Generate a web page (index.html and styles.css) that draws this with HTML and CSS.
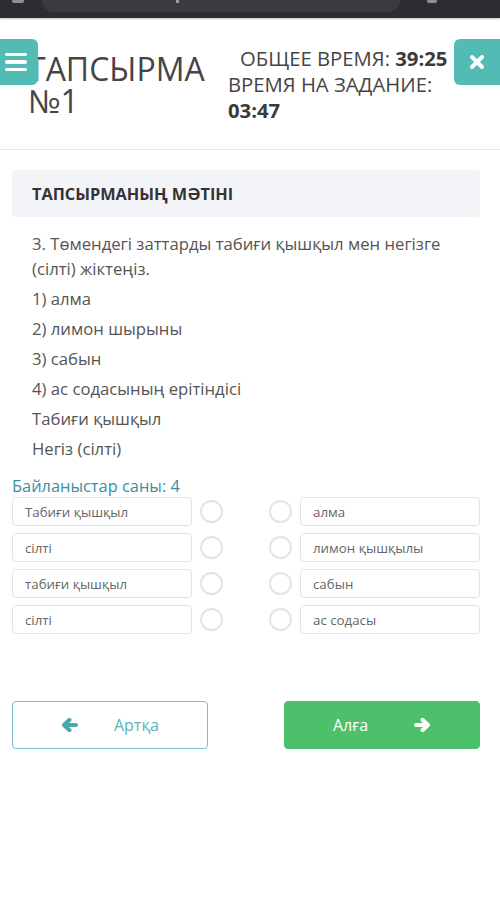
FILE: index.html
```html
<!DOCTYPE html>
<html lang="kk">
<head>
<meta charset="utf-8">
<title>Тапсырма №1</title>
<link rel="stylesheet" href="styles.css">
</head>
<body>
<div class="topbar">
  <span class="tb-icon tb-left"></span>
  <div class="urlbar"><span class="url-mark"></span></div>
  <span class="tb-icon tb-right"></span>
</div>
<header class="head">
  <button class="menu-btn" aria-label="menu">
    <span class="bar"></span><span class="bar"></span><span class="bar"></span>
  </button>
  <div class="title">ТАПСЫРМА<br>№1</div>
  <div class="timer">
    <div class="tline first">ОБЩЕЕ ВРЕМЯ: <b>39:25</b></div>
    <div class="tline">ВРЕМЯ НА ЗАДАНИЕ:</div>
    <div class="tline"><b>03:47</b></div>
  </div>
  <button class="close-btn" aria-label="close">
    <svg width="16" height="16" viewBox="0 0 16 16"><path d="M3 3 L13 13 M13 3 L3 13" stroke="#fff" stroke-width="4" stroke-linecap="round" fill="none"/></svg>
  </button>
</header>
<main class="main">
  <div class="sec-head">ТАПСЫРМАНЫҢ МӘТІНІ</div>
  <div class="question">
    <p>3. Төмендегі заттарды табиғи қышқыл мен негізге (сілті) жіктеңіз.</p>
    <p>1) алма</p>
    <p>2) лимон шырыны</p>
    <p>3) сабын</p>
    <p>4) ас содасының ерітіндісі</p>
    <p>Табиғи қышқыл</p>
    <p>Негіз (сілті)</p>
  </div>
  <div class="links-label">Байланыстар саны: 4</div>
  <div class="pairs">
    <div class="pair">
      <div class="side"><div class="box">Табиғи қышқыл</div><span class="dot"></span></div>
      <div class="side"><span class="dot"></span><div class="box">алма</div></div>
    </div>
    <div class="pair">
      <div class="side"><div class="box">сілті</div><span class="dot"></span></div>
      <div class="side"><span class="dot"></span><div class="box">лимон қышқылы</div></div>
    </div>
    <div class="pair">
      <div class="side"><div class="box">табиғи қышқыл</div><span class="dot"></span></div>
      <div class="side"><span class="dot"></span><div class="box">сабын</div></div>
    </div>
    <div class="pair">
      <div class="side"><div class="box">сілті</div><span class="dot"></span></div>
      <div class="side"><span class="dot"></span><div class="box">ас содасы</div></div>
    </div>
  </div>
  <div class="nav">
    <button class="btn btn-back">
      <svg width="17" height="14" viewBox="0 0 17 14"><path d="M3 7 H15 M8.5 1.8 L3 7 L8.5 12.2" stroke="#4aa9ae" stroke-width="4" stroke-linecap="round" stroke-linejoin="round" fill="none"/></svg>
      <span>Артқа</span>
    </button>
    <button class="btn btn-next">
      <span>Алға</span>
      <svg width="17" height="14" viewBox="0 0 17 14"><path d="M14 7 H2 M8.5 1.8 L14 7 L8.5 12.2" stroke="#fff" stroke-width="4" stroke-linecap="round" stroke-linejoin="round" fill="none"/></svg>
    </button>
  </div>
</main>
</body>
</html>
```

FILE: styles.css
```css
* { box-sizing: border-box; }
html, body { margin: 0; padding: 0; background: #fff; }
body {
  font-family: "Open Sans", "Noto Sans", sans-serif;
  color: #555;
  width: 500px;
  overflow: hidden;
}
button { font-family: inherit; }

.topbar {
  height: 18px;
  background: #2c2d31;
  display: flex;
  align-items: flex-start;
  position: relative;
  box-shadow: 0 1px 2px rgba(0,0,0,0.25);
}
.tb-icon {
  display: block;
  width: 12px;
  height: 3px;
  background: #8d8e92;
  border-radius: 0 0 2px 2px;
}
.tb-left { margin-left: 12px; }
.urlbar {
  margin-left: 18px;
  width: 358px;
  height: 12px;
  background: #3a3b3f;
  border-radius: 0 0 12px 12px;
  display: flex;
  justify-content: flex-start;
}
.url-mark {
  display: block;
  margin-left: 134px;
  width: 3px;
  height: 3px;
  background: #9a9b9f;
}
.tb-right { margin-left: 27px; width: 10px; }

.head {
  position: relative;
  display: flex;
  align-items: flex-start;
  height: 132px;
  border-bottom: 1px solid #e9e9ea;
}
.menu-btn {
  position: absolute;
  left: 0;
  top: 21px;
  width: 38px;
  height: 46px;
  border: 0;
  padding: 0 0 0 5px;
  background: #52bcb4;
  border-radius: 0 6px 6px 0;
  display: flex;
  flex-direction: column;
  justify-content: center;
  gap: 4px;
}
.menu-btn .bar {
  display: block;
  width: 22px;
  height: 3.5px;
  background: #fff;
  border-radius: 2px;
}
.title {
  flex: none;
  width: 200px;
  margin-left: 28px;
  margin-top: 35px;
  font-size: 32px;
  line-height: 32px;
  color: #454545;
  font-weight: 400;
}
.timer {
  flex: none;
  margin-top: 27px;
  font-size: 20.3px;
  line-height: 26px;
  color: #454545;
  white-space: nowrap;
}
.timer b { font-weight: 700; color: #3a3a3a; }
.tline.first { padding-left: 12px; }
.close-btn {
  margin-left: auto;
  margin-top: 21px;
  width: 46px;
  height: 46px;
  border: 0;
  padding: 0;
  background: #52bcb4;
  border-radius: 6px 0 0 6px;
  display: flex;
  align-items: center;
  justify-content: center;
}

.main { padding: 20px 20px 0 12px; }
.sec-head {
  height: 47px;
  background: #f3f4f8;
  border-radius: 4px;
  padding-left: 20px;
  display: flex;
  align-items: center;
  font-weight: 700;
  font-size: 16.3px;
  color: #333;
}
.question {
  padding: 14px 0 0 20px;
  font-size: 16.7px;
  line-height: 25px;
  color: #555;
}
.question p { margin: 0 0 5px; }
.links-label {
  margin-top: 14px;
  font-size: 16.4px;
  line-height: 22px;
  color: #3b8ea3;
}
.pairs {
  display: flex;
  flex-direction: column;
  gap: 7px;
}
.pair {
  display: flex;
  justify-content: space-between;
  align-items: center;
}
.side {
  display: flex;
  align-items: center;
  gap: 8px;
}
.box {
  width: 180px;
  height: 29px;
  border: 1px solid #e2e2e4;
  border-radius: 4px;
  padding-left: 12px;
  display: flex;
  align-items: center;
  font-size: 13.3px;
  color: #666;
}
.dot {
  display: block;
  width: 23px;
  height: 23px;
  border: 2px solid #e4e4e6;
  border-radius: 50%;
}
.nav {
  margin-top: 67px;
  display: flex;
  justify-content: space-between;
}
.btn {
  width: 196px;
  height: 48px;
  border-radius: 4px;
  padding: 0 48px;
  display: flex;
  align-items: center;
  justify-content: space-between;
  font-size: 16px;
}
.btn-back {
  background: #fff;
  border: 1px solid #7fc1c6;
  color: #5cb3b8;
}
.btn-next {
  background: #4dc06b;
  border: 1px solid #4dc06b;
  color: #fff;
}
```
